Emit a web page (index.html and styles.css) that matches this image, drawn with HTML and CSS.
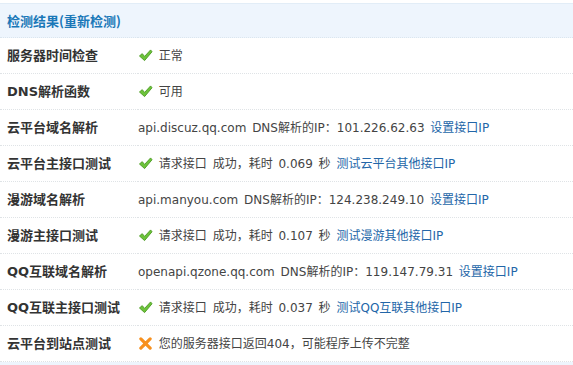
FILE: index.html
```html
<!DOCTYPE html>
<html lang="zh-CN">
<head>
    <meta charset="UTF-8">
    <title>检测结果</title>
    <link rel="stylesheet" href="styles.css">
</head>
<body>
<table class="check-table">
    <thead>
    <tr>
        <th colspan="2"><a href="#" class="head-link">检测结果(重新检测)</a></th>
    </tr>
    </thead>
    <tbody>
    <tr>
        <td class="label">服务器时间检查</td>
        <td class="value"><svg class="icon" viewBox="0 0 16 14"><path d="M1.5 7.5 L4.5 5 L7 8 L13.5 1 L15 3 L7 12.5 Z" fill="#6cc33a" stroke="#4c9a22" stroke-width="1" stroke-linejoin="round"/></svg> 正常</td>
    </tr>
    <tr>
        <td class="label">DNS解析函数</td>
        <td class="value"><svg class="icon" viewBox="0 0 16 14"><path d="M1.5 7.5 L4.5 5 L7 8 L13.5 1 L15 3 L7 12.5 Z" fill="#6cc33a" stroke="#4c9a22" stroke-width="1" stroke-linejoin="round"/></svg> 可用</td>
    </tr>
    <tr>
        <td class="label">云平台域名解析</td>
        <td class="value">api.discuz.qq.com DNS解析的IP：101.226.62.63 <a href="#">设置接口IP</a></td>
    </tr>
    <tr>
        <td class="label">云平台主接口测试</td>
        <td class="value"><svg class="icon" viewBox="0 0 16 14"><path d="M1.5 7.5 L4.5 5 L7 8 L13.5 1 L15 3 L7 12.5 Z" fill="#6cc33a" stroke="#4c9a22" stroke-width="1" stroke-linejoin="round"/></svg> 请求接口 成功，耗时 0.069 秒 <a href="#">测试云平台其他接口IP</a></td>
    </tr>
    <tr>
        <td class="label">漫游域名解析</td>
        <td class="value">api.manyou.com DNS解析的IP：124.238.249.10 <a href="#">设置接口IP</a></td>
    </tr>
    <tr>
        <td class="label">漫游主接口测试</td>
        <td class="value"><svg class="icon" viewBox="0 0 16 14"><path d="M1.5 7.5 L4.5 5 L7 8 L13.5 1 L15 3 L7 12.5 Z" fill="#6cc33a" stroke="#4c9a22" stroke-width="1" stroke-linejoin="round"/></svg> 请求接口 成功，耗时 0.107 秒 <a href="#">测试漫游其他接口IP</a></td>
    </tr>
    <tr>
        <td class="label">QQ互联域名解析</td>
        <td class="value">openapi.qzone.qq.com DNS解析的IP：119.147.79.31 <a href="#">设置接口IP</a></td>
    </tr>
    <tr>
        <td class="label">QQ互联主接口测试</td>
        <td class="value"><svg class="icon" viewBox="0 0 16 14"><path d="M1.5 7.5 L4.5 5 L7 8 L13.5 1 L15 3 L7 12.5 Z" fill="#6cc33a" stroke="#4c9a22" stroke-width="1" stroke-linejoin="round"/></svg> 请求接口 成功，耗时 0.037 秒 <a href="#">测试QQ互联其他接口IP</a></td>
    </tr>
    <tr>
        <td class="label">云平台到站点测试</td>
        <td class="value"><svg class="icon" viewBox="0 0 16 14"><path d="M3 2 L13 12 M13 2 L3 12" stroke="#f7901e" stroke-width="3.4" stroke-linecap="round"/></svg> 您的服务器接口返回404，可能程序上传不完整</td>
    </tr>
    </tbody>
    <tfoot>
    <tr>
        <td colspan="2" class="foot"></td>
    </tr>
    </tfoot>
</table>
</body>
</html>
```

FILE: styles.css
```css
* {
    box-sizing: border-box;
    margin: 0;
    padding: 0;
}

body {
    background-color: #fff;
    color: #333;
    font-family: "DejaVu Sans", "Noto Sans CJK SC", sans-serif;
    font-size: 12px;
    padding-top: 3px;
}

.check-table {
    width: 100%;
    border-collapse: collapse;
}

.check-table th {
    height: 34px;
    padding: 0 7px;
    text-align: left;
    background-color: #eef5fd;
    border-top: 1px solid #e2edf7;
    border-bottom: 1px dotted #dbe6ef;
}

.head-link {
    color: #1a78b8;
    font-family: "Noto Sans CJK SC", sans-serif;
    font-size: 13px;
    font-weight: bold;
    text-decoration: none;
}

.check-table td {
    height: 36px;
    padding-top: 0;
    padding-bottom: 2px;
    border-bottom: 1px dotted #dfe3e6;
    vertical-align: middle;
}

.label {
    width: 138px;
    padding-left: 7px;
    font-family: "DejaVu Sans", "Noto Sans CJK SC", sans-serif;
    font-size: 13px;
    font-weight: bold;
    color: #333;
}

.value {
    color: #444;
    word-spacing: 2px;
}

.value a {
    color: #2366a8;
    text-decoration: none;
}

.icon {
    width: 15px;
    height: 13px;
    vertical-align: -2px;
}

.check-table td.foot {
    height: 6px;
    padding: 0;
    background-color: #eef5fd;
    border-bottom: none;
}
```
